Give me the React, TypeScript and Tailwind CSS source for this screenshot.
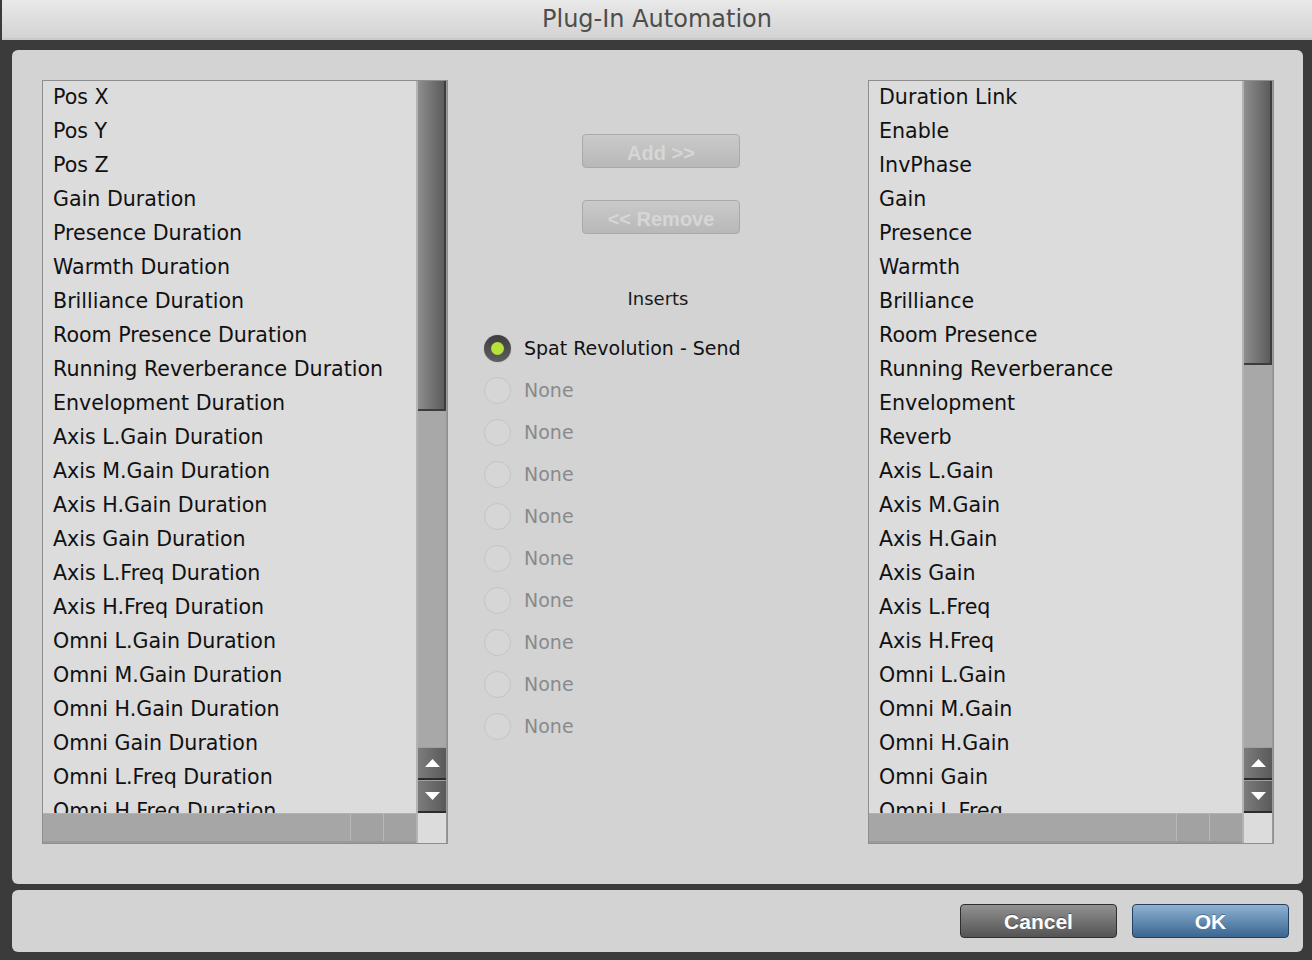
import React from "react";

const leftItems = [
  "Pos X",
  "Pos Y",
  "Pos Z",
  "Gain Duration",
  "Presence Duration",
  "Warmth Duration",
  "Brilliance Duration",
  "Room Presence Duration",
  "Running Reverberance Duration",
  "Envelopment Duration",
  "Axis L.Gain Duration",
  "Axis M.Gain Duration",
  "Axis H.Gain Duration",
  "Axis Gain Duration",
  "Axis L.Freq Duration",
  "Axis H.Freq Duration",
  "Omni L.Gain Duration",
  "Omni M.Gain Duration",
  "Omni H.Gain Duration",
  "Omni Gain Duration",
  "Omni L.Freq Duration",
  "Omni H.Freq Duration",
];

const rightItems = [
  "Duration Link",
  "Enable",
  "InvPhase",
  "Gain",
  "Presence",
  "Warmth",
  "Brilliance",
  "Room Presence",
  "Running Reverberance",
  "Envelopment",
  "Reverb",
  "Axis L.Gain",
  "Axis M.Gain",
  "Axis H.Gain",
  "Axis Gain",
  "Axis L.Freq",
  "Axis H.Freq",
  "Omni L.Gain",
  "Omni M.Gain",
  "Omni H.Gain",
  "Omni Gain",
  "Omni L.Freq",
];

const sans = '"DejaVu Sans", Verdana, sans-serif';
const helv = '"Liberation Sans", Arial, sans-serif';

function ArrowBtn({ up }: { up: boolean }) {
  return (
    <div className="h-[33px] w-full flex items-center justify-center bg-gradient-to-r from-[#7c7c7c] to-[#5a5a5a] border-t border-t-[#a0a0a0] border-b-2 border-b-[#2c2c2c]">
      <svg width="15" height="8" viewBox="0 0 15 8">
        {up ? (
          <polygon points="7.5,0 15,8 0,8" fill="#ffffff" />
        ) : (
          <polygon points="0,0 15,0 7.5,8" fill="#ffffff" />
        )}
      </svg>
    </div>
  );
}

function ListBox({ items, thumbH }: { items: string[]; thumbH: number }) {
  return (
    <div className="w-[406px] h-[764px] border border-[#8e8e8e] bg-[#dcdcdc] flex">
      <div className="w-[373px] flex flex-col">
        <div className="h-[732px] overflow-hidden">
          <div className="-mt-px pl-[10px] flex flex-col">
            {items.map((t, i) => (
              <div
                key={i}
                className="h-[34px] leading-[34px] text-[20.6px] text-[#111] whitespace-nowrap"
              >
                {t}
              </div>
            ))}
          </div>
        </div>
        <div className="h-[30px] flex bg-[#a6a6a6] border-b-2 border-b-[#9a9a9a]">
          <div className="flex-1 border-t border-t-[#b2b2b2]" />
          <div className="w-[33px] bg-[#a2a2a2] border-l border-l-[#b8b8b8] border-t border-t-[#b2b2b2]" />
          <div className="w-[33px] bg-[#a2a2a2] border-l border-l-[#b8b8b8] border-t border-t-[#b2b2b2]" />
        </div>
      </div>
      <div className="w-[31px] flex flex-col bg-[#a8a8a8] border-l-2 border-l-[#b3b3b3] border-r border-r-[#9a9a9a]">
        <div
          className="w-full bg-gradient-to-r from-[#8e8e8e] to-[#5c5c5c] border-r-2 border-r-[#3c3c3c] border-b-2 border-b-[#3c3c3c]"
          style={{ height: thumbH }}
        />
        <div className="flex-1" />
        <ArrowBtn up />
        <ArrowBtn up={false} />
        <div className="h-[30px] bg-[#dcdcdc]" />
      </div>
    </div>
  );
}

function DisabledBtn({ label }: { label: string }) {
  return (
    <div
      className="w-[158px] h-[34px] pt-[3px] rounded-[4px] border border-[#a9a9a9] bg-gradient-to-b from-[#cacaca] to-[#b8b8b8] flex items-center justify-center text-[20px] font-bold text-[#d6d6d6]"
      style={{ fontFamily: helv }}
    >
      {label}
    </div>
  );
}

function Radio({ selected, label }: { selected?: boolean; label: string }) {
  return (
    <div className="h-[42px] flex items-center">
      {selected ? (
        <div className="w-[27px] h-[27px] rounded-full bg-gradient-to-b from-[#3e3e3e] to-[#5e5e5e] flex items-center justify-center shadow-[0_0_1px_#777]">
          <div className="w-[13px] h-[13px] rounded-full bg-[#b6e23a]" />
        </div>
      ) : (
        <div className="w-[27px] h-[27px] rounded-full border-[1.5px] border-[#c4c4c4] bg-[#d6d6d6]" />
      )}
      <span
        className={
          "ml-[13px] text-[19px] whitespace-nowrap " +
          (selected ? "text-[#111]" : "text-[#8a8a8a]")
        }
      >
        {label}
      </span>
    </div>
  );
}

export default function App() {
  return (
    <div
      className="w-[1312px] h-[960px] bg-[#3b3b3b] flex flex-col overflow-hidden"
      style={{ fontFamily: sans }}
    >
      <div className="h-[40px] pl-[2px] flex">
        <div className="flex-1 h-full bg-gradient-to-b from-[#e9e9e9] to-[#d3d3d3] border-b-2 border-b-[#c9c9c9] flex items-center justify-center text-[24px] text-[#4d4d4d]">
          Plug-In Automation
        </div>
      </div>
      <div className="pl-[12px] pr-[9px] pt-[10px] flex flex-col gap-[6px]">
        <div className="h-[834px] rounded-[6px] bg-[#d3d3d3] pt-[30px] pl-[30px] flex">
          <ListBox items={leftItems} thumbH={330} />
          <div className="w-[420px] flex flex-col">
            <div className="mt-[54px] pl-[134px] flex flex-col gap-[32px]">
              <DisabledBtn label="Add >>" />
              <DisabledBtn label="<< Remove" />
            </div>
            <div className="mt-[55px] h-[20px] leading-[20px] text-center text-[18px] text-[#1a1a1a]">
              Inserts
            </div>
            <div className="mt-[18px] pl-[36px] flex flex-col">
              <Radio selected label="Spat Revolution - Send" />
              {Array.from({ length: 9 }).map((_, i) => (
                <Radio key={i} label="None" />
              ))}
            </div>
          </div>
          <ListBox items={rightItems} thumbH={284} />
        </div>
        <div className="h-[62px] rounded-[6px] bg-[#d3d3d3] flex items-center justify-end pr-[14px] gap-[15px]">
          <div
            className="w-[157px] h-[34px] pt-[2px] rounded-[4px] border-[1.5px] border-[#2e2e2e] bg-gradient-to-b from-[#929292] to-[#545454] flex items-center justify-center text-[21px] font-bold text-white [text-shadow:0_-1px_0_rgba(0,0,0,0.35)]"
            style={{ fontFamily: helv }}
          >
            Cancel
          </div>
          <div
            className="w-[157px] h-[34px] pt-[2px] rounded-[4px] border-[1.5px] border-[#24405e] bg-gradient-to-b from-[#8fb2d4] to-[#3a6690] flex items-center justify-center text-[21px] font-bold text-white [text-shadow:0_-1px_0_rgba(0,0,0,0.3)]"
            style={{ fontFamily: helv }}
          >
            OK
          </div>
        </div>
      </div>
    </div>
  );
}
